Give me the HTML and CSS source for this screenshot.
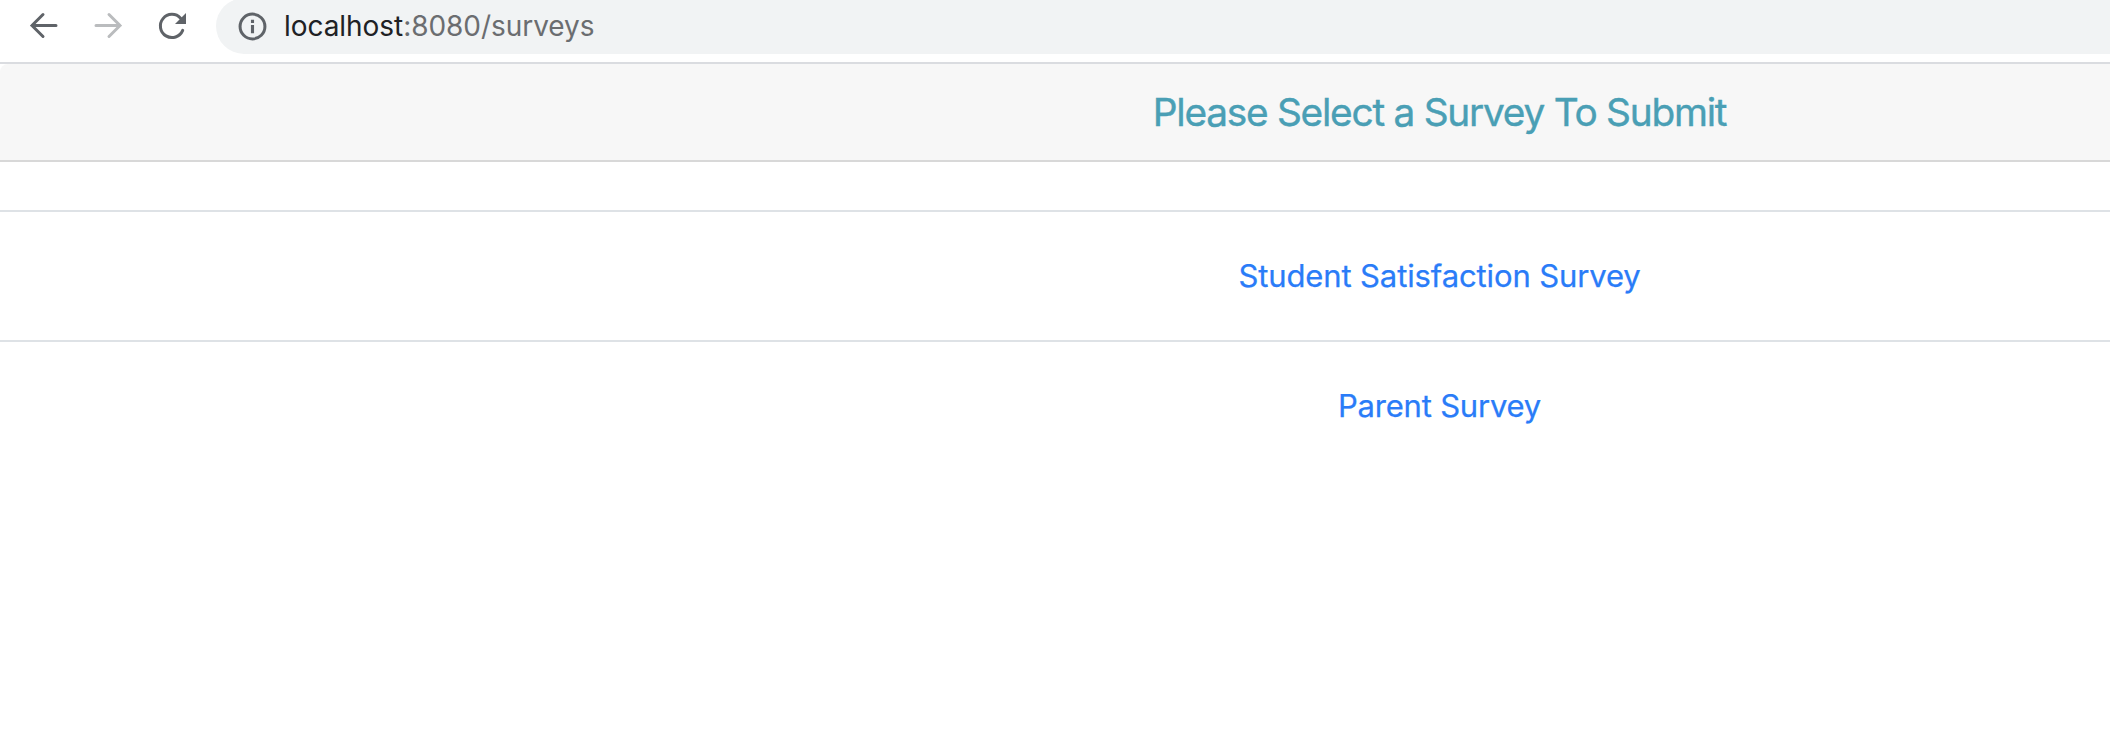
FILE: index.html
```
<!DOCTYPE html>
<html lang="en">
<head>
<meta charset="utf-8">
<title>Surveys</title>
<link rel="stylesheet" href="styles.css">
</head>
<body>
<div class="window">
  <header class="toolbar">
    <nav class="nav">
      <svg class="icon" viewBox="0 0 32 32"><path d="M28 15.5H4M15 4.5L4 15.5L15 26.5"/></svg>
      <svg class="icon icon-disabled" viewBox="0 0 32 32"><path d="M4 15.5H28M17 4.5L28 15.5L17 26.5"/></svg>
      <svg class="icon" viewBox="0 0 32 32"><path d="M26.7 20.4A11.6 11.6 0 1 1 24.6 8.2"/><path class="solid" d="M30 3V14H19Z"/></svg>
    </nav>
    <div class="address">
      <svg class="info" viewBox="0 0 28 28"><circle cx="14" cy="14" r="12"/><path class="solid" d="M12.5 7.5h3v3h-3zM12.5 12.5h3v8h-3z"/></svg>
      <span class="url"><span class="host">localhost</span>:8080/surveys</span>
    </div>
  </header>
  <main class="page">
    <h1 class="title">Please Select a Survey To Submit</h1>
    <ul class="surveys">
      <li class="survey"><a class="link" href="#">Student Satisfaction Survey</a></li>
      <li class="survey"><a class="link link-parent" href="#">Parent Survey</a></li>
    </ul>
  </main>
</div>
</body>
</html>
```
FILE: styles.css
```
* { box-sizing: border-box; }
html { background: #fff; }
body { margin: 0; height: 750px; overflow: hidden; font-family: Inter, "Liberation Sans", sans-serif; }
.window { width: 100%; }
.toolbar { display: flex; height: 64px; border-bottom: 2px solid #dadce0; background: #fff; }
.nav { display: flex; gap: 32px; padding: 10px 28px 0; width: 216px; }
.icon { width: 32px; height: 32px; flex: none; fill: none; stroke: #5f6368; stroke-width: 3; stroke-linecap: round; }
.icon-disabled { stroke: #babcbe; }
.solid { fill: #5f6368; stroke: none; }
.address { display: flex; align-items: center; flex: 1; height: 56px; margin-top: -2px; padding-left: 22px; border-radius: 28px 0 0 28px; background: #f1f3f4; }
.info { width: 29px; height: 29px; fill: none; stroke: #5f6368; stroke-width: 2.9; }
.url { margin-left: 17px; font-size: 28px; line-height: 36px; color: #6b6d70; letter-spacing: -0.05px; }
.host { color: #202124; }
/* Centred content is offset: its axis sits right of the visible middle. */
.title { margin: 0; height: 98px; padding-left: 769px; text-align: center; border-bottom: 2px solid #d8d8d8; border-top-left-radius: 8px; background: #f7f7f7; font-size: 38.8px; font-weight: 400; line-height: 96px; color: #4a9fb5; letter-spacing: -1.25px; -webkit-text-stroke: 0.4px #4a9fb5; }
.surveys { list-style: none; margin: 48px 0 0; padding: 0; }
.survey { height: 130px; padding-left: 769px; text-align: center; border-top: 2px solid #dee2e6; line-height: 128px; }
.link { color: #2a7cf8; font-size: 31px; letter-spacing: -0.12px; text-decoration: none; -webkit-text-stroke: 0.25px #2a7cf8; }
.link-parent { letter-spacing: -0.2px; }
```
